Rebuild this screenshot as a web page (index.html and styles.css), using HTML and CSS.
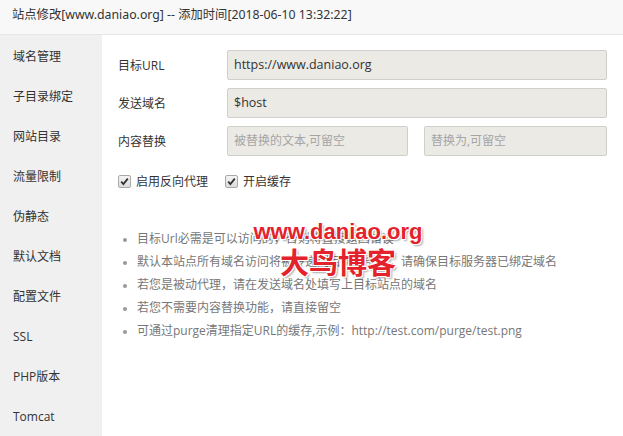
FILE: index.html
```html
<!DOCTYPE html>
<html>
<head>
<meta charset="utf-8">
<link rel="stylesheet" href="styles.css">
</head>
<body>
<div class="dialog">
  <div class="title">站点修改[www.daniao.org] -- 添加时间[2018-06-10 13:32:22]</div>
  <div class="body">
    <ul class="side">
      <li>域名管理</li>
      <li>子目录绑定</li>
      <li>网站目录</li>
      <li>流量限制</li>
      <li>伪静态</li>
      <li>默认文档</li>
      <li>配置文件</li>
      <li>SSL</li>
      <li>PHP版本</li>
      <li>Tomcat</li>
    </ul>
    <div class="main">
      <div class="row">
        <span class="label">目标URL</span>
        <div class="input">https://www.daniao.org</div>
      </div>
      <div class="row">
        <span class="label">发送域名</span>
        <div class="input">$host</div>
      </div>
      <div class="row">
        <span class="label">内容替换</span>
        <div class="input half ph">被替换的文本,可留空</div>
        <div class="input half ph">替换为,可留空</div>
      </div>
      <div class="checks">
        <label class="check"><span class="box"><svg width="9" height="9" viewBox="0 0 9 9"><path d="M1.2 4.6 L3.4 7 L7.8 1.6" fill="none" stroke="#333" stroke-width="1.8"/></svg></span>启用反向代理</label>
        <label class="check"><span class="box"><svg width="9" height="9" viewBox="0 0 9 9"><path d="M1.2 4.6 L3.4 7 L7.8 1.6" fill="none" stroke="#333" stroke-width="1.8"/></svg></span>开启缓存</label>
      </div>
      <ul class="tips">
        <li>目标Url必需是可以访问的，否则将直接返回错误</li>
        <li>默认本站点所有域名访问将被传递到目标服务器，请确保目标服务器已绑定域名</li>
        <li>若您是被动代理，请在发送域名处填写上目标站点的域名</li>
        <li>若您不需要内容替换功能，请直接留空</li>
        <li>可通过purge清理指定URL的缓存,示例：http://test.com/purge/test.png</li>
      </ul>
      <div class="mark">
        <div class="mark-url">www.daniao.org</div>
        <div class="mark-cn">大鸟博客</div>
      </div>
    </div>
  </div>
</div>
</body>
</html>
```
FILE: styles.css
```css
* { box-sizing: border-box; }
html, body { margin: 0; padding: 0; }
body {
  width: 623px;
  height: 436px;
  overflow: hidden;
  font-family: "Open Sans", "Noto Sans CJK SC", sans-serif;
  color: #333;
  background: #fff;
}
.dialog { display: flex; flex-direction: column; height: 436px; }
.title {
  height: 35px;
  flex: none;
  background: #f8f8f8;
  border-bottom: 1px solid #e6e6e6;
  padding-left: 12px;
  font-family: "Noto Sans", "Noto Sans CJK SC", sans-serif;
  font-size: 12.3px;
  line-height: 30px;
  color: #333;
  white-space: nowrap;
}
.body { display: flex; flex: 1; }
.side {
  list-style: none;
  margin: 0;
  padding: 2px 0 0 0;
  width: 102px;
  flex: none;
  background: #f0f0f0;
}
.side li {
  height: 40px;
  line-height: 40px;
  padding-left: 13px;
  font-size: 12px;
  color: #333;
}
.main { position: relative; flex: 1; padding: 15px 16px 0 16px; }
.row { display: flex; align-items: center; height: 30px; margin-bottom: 8px; }
.label { width: 109px; flex: none; font-size: 12px; color: #333; }
.input {
  width: 380px;
  height: 30px;
  border: 1px solid #cfcfcb;
  border-radius: 2px;
  background: #ebeae5;
  font-size: 12.5px;
  line-height: 28px;
  padding-left: 6px;
  color: #333;
}
.input.half { width: 181px; margin-right: 16px; }
.input.half:last-child { width: 183px; margin-right: 0; }
.input.ph { color: #a5a5a5; font-size: 12px; }
.checks { display: flex; margin-top: 15px; height: 20px; align-items: center; }
.check { display: flex; align-items: center; font-size: 12px; margin-right: 17px; color: #333; }
.box {
  width: 13px; height: 13px;
  border: 1px solid #aaa;
  border-radius: 2px;
  background: linear-gradient(#f4f4f4, #dcdcdc);
  display: flex; align-items: center; justify-content: center;
  margin-right: 5px;
}
.tips {
  margin: 36px 0 0 0;
  padding: 0 0 0 19px;
  font-size: 12px;
  color: #777;
}
.tips li { line-height: 23px; }
.tips li::marker { color: #999; font-size: 10px; }
.mark {
  position: absolute;
  left: 151px;
  top: 184px;
  color: #e3222c;
  font-weight: bold;
  font-family: "Liberation Sans", "Noto Sans CJK SC", sans-serif;
  text-shadow: 1px 1px 0 #fff, -1px -1px 0 #fff, 1px -1px 0 #fff, -1px 1px 0 #fff, 2px 2px 2px rgba(0,0,0,0.35);
  text-align: center;
  width: 170px;
}
.mark-url { font-size: 22px; line-height: 26px; }
.mark-cn { font-size: 29px; line-height: 38px; }
```
